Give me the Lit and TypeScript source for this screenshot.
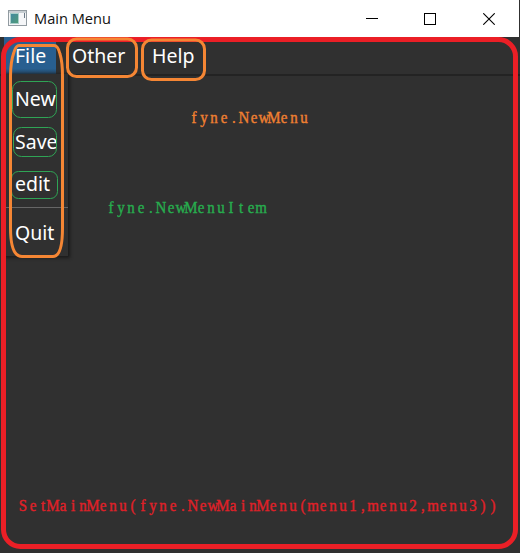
import { LitElement, html, svg, css } from "lit";
import { customElement } from "lit/decorators.js";

interface Note {
  text: string;
  x: number;
  y: number;
  cls: string;
}

const PITCH = 10;
const SQUEEZE = 0.88;

const notes: Note[] = [
  { text: "fyne.NewMenu", x: 189, y: 123, cls: "orange" },
  { text: "fyne.NewMenuItem", x: 106, y: 213, cls: "green" },
  { text: "SetMainMenu(fyne.NewMainMenu(menu1,menu2,menu3))", x: 18, y: 511, cls: "red" },
];

@customElement("title-bar")
export class TitleBar extends LitElement {
  static styles = css`
    :host {
      display: flex;
      align-items: center;
      height: 37px;
      margin-right: 1px;
      background: #fff;
      color: #111;
      font: 14.6px "Open Sans", "Noto Sans", sans-serif;
    }
    .icon { margin: 0 7px 1px 8px; flex: none; }
    .title { flex: 1; line-height: 36px; padding-bottom: 2px; }
    .controls { display: flex; padding-right: 1px; }
    .btn { width: 58.5px; display: flex; justify-content: center; }
  `;

  render() {
    return html`
      <svg class="icon" width="19" height="16" viewBox="0 0 19 16">
        <defs>
          <linearGradient id="g" x1="0" y1="0" x2="1" y2="1">
            <stop offset="0" stop-color="#438aa0" />
            <stop offset="1" stop-color="#4f9a78" />
          </linearGradient>
        </defs>
        <rect x=".5" y=".5" width="18" height="15" fill="#f5f6f8" stroke="#929ba1" />
        <rect x="1" y="1" width="17" height="2" fill="#c7ced2" />
        <rect x="2" y="3" width="9" height="11" fill="#a9cfca" />
        <rect x="3" y="4" width="7" height="9" fill="url(#g)" />
        <path d="M16.5 3v5" stroke="#6c7a88" />
      </svg>
      <span class="title">Main Menu</span>
      <div class="controls">
        <span class="btn"><svg width="12" height="12"><path d="M0 5.5H12" stroke="#000" /></svg></span>
        <span class="btn"><svg width="12" height="12"><rect x=".5" y=".5" width="11" height="11" fill="none" stroke="#000" /></svg></span>
        <span class="btn"><svg width="12" height="12"><path d="M.3 .3L11.7 11.7M11.7 .3L.3 11.7" stroke="#000" stroke-width="1.1" /></svg></span>
      </div>
    `;
  }
}

@customElement("app-root")
export class AppRoot extends LitElement {
  static styles = css`
    :host {
      display: flex;
      flex-direction: column;
      position: relative;
      width: 520px;
      height: 553px;
      overflow: hidden;
      background: #303030;
      color: #fff;
      font: 19.5px/26px "Noto Sans", "Open Sans", sans-serif;
    }
    .bar {
      display: flex;
      height: 37px;
      padding-left: 4px;
      background: #303030;
      border-bottom: 2px solid #232323;
      flex: none;
    }
    .entry { padding: 6px 0 0 12px; box-sizing: border-box; }
    .file { width: 52px; padding-left: 11px; background: linear-gradient(#285f90 85%, #244866); }
    .other { width: 84px; padding-left: 16px; }
    .help { width: 70px; }
    .popup {
      position: absolute;
      top: 74px;
      left: 5px;
      width: 63px;
      height: 182px;
      background: #303030;
      box-shadow: 1px 1px 3px 1px #1b1b1b;
      display: flex;
      flex-direction: column;
    }
    .item { height: 42.6px; padding: 12px 0 0 10px; box-sizing: border-box; flex: none; }
    .rule { height: 1px; margin-top: 5px; background: #666; flex: none; }
    .marks { position: absolute; inset: 0; pointer-events: none; }
    .frame { fill: none; stroke: #eb1f26; stroke-width: 5; }
    .group { fill: none; stroke: #f58634; stroke-width: 3; }
    .leaf { fill: none; stroke: #2fa455; stroke-width: 1; }
    .note { font: 17px "Liberation Serif", serif; text-anchor: middle; stroke-width: 0.4; }
    .orange { fill: #f08030; stroke: #f08030; }
    .green { fill: #27ad4e; stroke: #27ad4e; }
    .red { fill: #e02028; stroke: #e02028; }
  `;

  private note(n: Note) {
    const xs = [...n.text].map((_, i) => ((i + 0.5) * PITCH) / SQUEEZE).join(" ");
    return svg`<text class="note ${n.cls}" x=${xs} y="0"
      transform="translate(${n.x} ${n.y}) scale(${SQUEEZE} 1)">${n.text}</text>`;
  }

  render() {
    return html`
      <title-bar></title-bar>
      <nav class="bar">
        <span class="entry file">File</span>
        <span class="entry other">Other</span>
        <span class="entry help">Help</span>
      </nav>
      <div class="popup">
        <span class="item">New</span>
        <span class="item">Save</span>
        <span class="item">edit</span>
        <div class="rule"></div>
        <span class="item">Quit</span>
      </div>
      <svg class="marks" width="520" height="553">
        <rect class="frame" x="3.5" y="39.5" width="512" height="507" rx="17" />
        <rect class="leaf" x="12.5" y="81.5" width="44" height="36" rx="8" />
        <rect class="leaf" x="13.5" y="127.5" width="43" height="29" rx="8" />
        <rect class="leaf" x="11.5" y="171.5" width="46" height="27" rx="7" />
        <path class="group" d="M19 45.5H54Q58 45.5 60 54Q62.500 62 62.500 76V228Q62.500 256.500 53 256.500H22Q10.500 256.500 10.500 228V76Q10.500 62 14 52Q16 45.500 19 45.500Z" />
        <rect class="group" x="67.500" y="39" width="69" height="37.500" rx="9" />
        <rect class="group" x="142.500" y="40" width="62" height="39.500" rx="9" />
        ${notes.map((n) => this.note(n))}
      </svg>
    `;
  }
}
